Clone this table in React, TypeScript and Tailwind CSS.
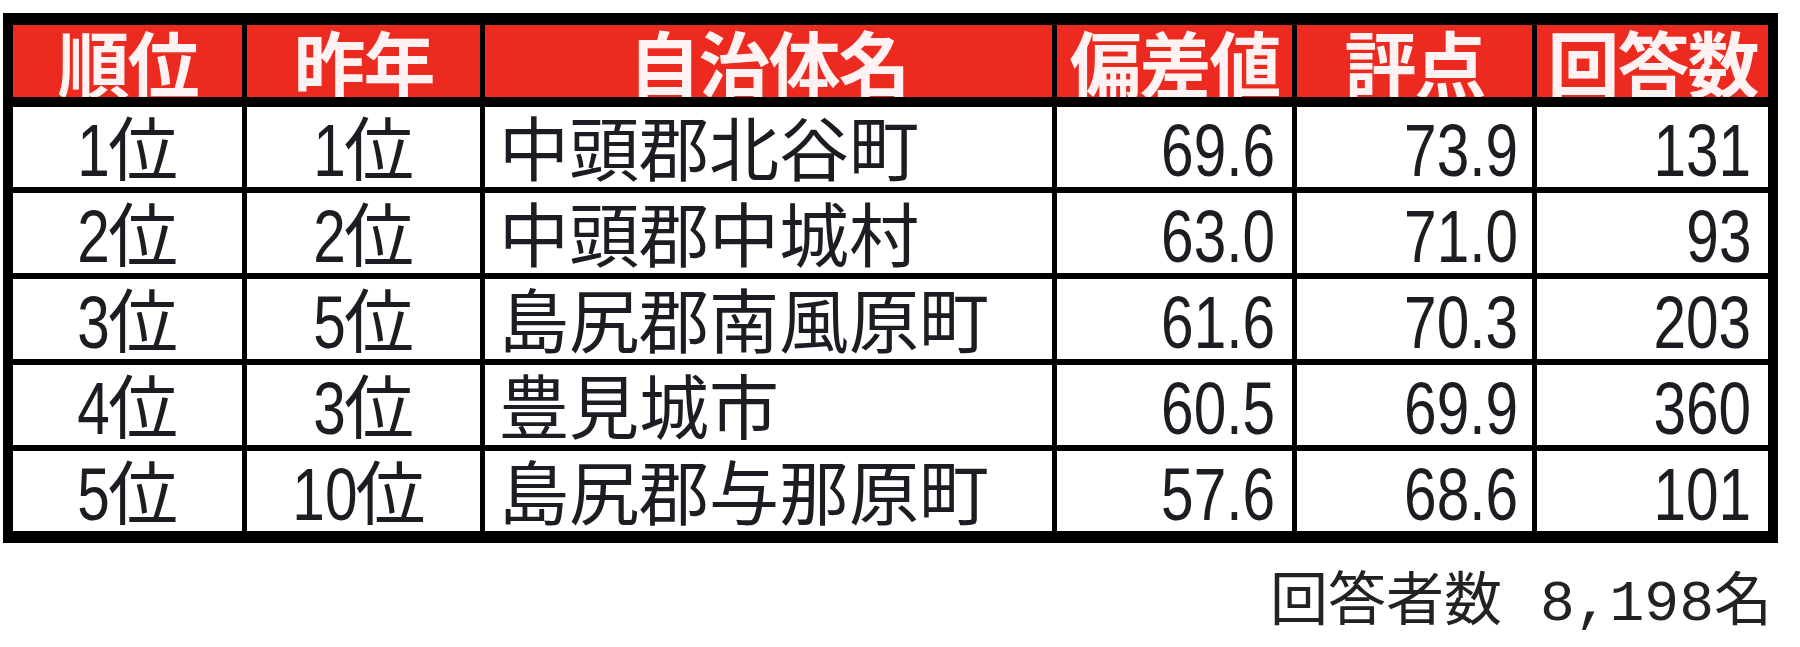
const cols = "grid grid-cols-[229px_233px_567px_235px_235px_231px] gap-x-[5px]";

const headers = ["順位", "昨年", "自治体名", "偏差値", "評点", "回答数"];

const rows = [
  { rank: "1", last: "1", name: "中頭郡北谷町", dev: "69.6", score: "73.9", count: "131" },
  { rank: "2", last: "2", name: "中頭郡中城村", dev: "63.0", score: "71.0", count: "93" },
  { rank: "3", last: "5", name: "島尻郡南風原町", dev: "61.6", score: "70.3", count: "203" },
  { rank: "4", last: "3", name: "豊見城市", dev: "60.5", score: "69.9", count: "360" },
  { rank: "5", last: "10", name: "島尻郡与那原町", dev: "57.6", score: "68.6", count: "101" },
];

// digits in the source are a narrow gothic; squeeze Liberation Sans to match
function Digits({ text }: { text: string }) {
  return (
    <span className="inline-block origin-right scale-x-[0.78] text-[75px] font-['Liberation_Sans',sans-serif]">
      {text}
    </span>
  );
}

function Place({ n }: { n: string }) {
  const pull = n.length > 1 ? "-ml-[0.5em]" : "-ml-[0.25em]";
  return (
    <span className="whitespace-nowrap">
      <span className={"inline-block origin-right scale-x-[0.78] text-[75px] font-['Liberation_Sans',sans-serif] " + pull}>
        {n}
      </span>
      <span className="-ml-[2px]">位</span>
    </span>
  );
}

export default function App() {
  return (
    <div className="w-[1800px] h-[647px] bg-white pl-[3px] pt-[13px] overflow-hidden">
      <div className="w-[1775px] bg-black px-[10px] py-[12px]">
        <div className="flex flex-col gap-[6px]">
          {/* header */}
          <div className={cols + " mb-[4px]"}>
            {headers.map((h) => (
              <div
                key={h}
                className="h-[72px] bg-[#ec2a1f] text-center text-[72px] leading-none font-bold text-[#fff2f2] font-['Noto_Sans_CJK_JP',sans-serif] tracking-[-2px] overflow-hidden"
              >
                {h}
              </div>
            ))}
          </div>
          {rows.map((r) => (
            <div
              key={r.rank}
              className={
                cols +
                " h-[80px] text-[70px] leading-none text-[#1c1c22] font-['Noto_Sans_CJK_JP',sans-serif]"
              }
            >
              <div className="bg-white pt-[4px] pl-[10px] text-center overflow-hidden">
                <Place n={r.rank} />
              </div>
              <div className="bg-white pt-[4px] pl-[10px] text-center overflow-hidden">
                <Place n={r.last} />
              </div>
              <div className="bg-white pt-[4px] pl-[14px] text-left overflow-hidden">{r.name}</div>
              <div className="bg-white pt-[4px] pr-[17px] text-right overflow-hidden">
                <Digits text={r.dev} />
              </div>
              <div className="bg-white pt-[4px] pr-[14px] text-right overflow-hidden">
                <Digits text={r.score} />
              </div>
              <div className="bg-white pt-[4px] pr-[17px] text-right overflow-hidden">
                <Digits text={r.count} />
              </div>
            </div>
          ))}
        </div>
      </div>
      <div className="w-[1775px] mt-[23px] pr-[6px] flex justify-end items-baseline text-[58px] leading-none text-[#222]">
        <span className="font-['Noto_Sans_CJK_JP',sans-serif]">回答者数</span>
        <span className="ml-[38px] font-['Liberation_Mono',monospace]">8,198</span>
        <span className="font-['Noto_Sans_CJK_JP',sans-serif]">名</span>
      </div>
    </div>
  );
}
